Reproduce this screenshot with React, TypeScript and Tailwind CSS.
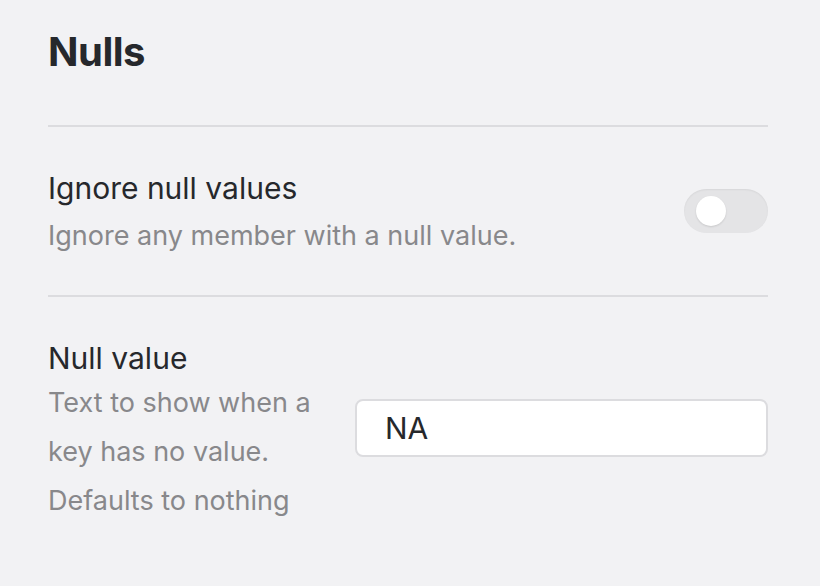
export default function App() {
  return (
    <div className="min-h-[586px] w-[820px] bg-[#f2f2f4] pl-12 pr-[52px] pt-[26px] font-['Inter',sans-serif]">
      <h1 className="text-[40px] font-bold leading-[52px] tracking-[-0.5px] text-[#26282c]">
        Nulls
      </h1>

      <hr className="mt-[47px] border-t-2 border-[#dcdcdf]" />

      <div className="flex items-center justify-between pt-[43px] pb-[43px]">
        <div>
          <div className="text-[30px] leading-[36px] text-[#26282c]">
            Ignore null values
          </div>
          <div className="mt-[14px] text-[27px] leading-[32px] text-[#88888b]">
            Ignore any member with a null value.
          </div>
        </div>
        <button className="relative h-[44px] w-[84px] rounded-full bg-[#e4e4e6] shadow-[inset_0_1px_2px_rgba(0,0,0,0.06)]">
          <span className="absolute left-[12px] top-[7px] h-[30px] w-[30px] rounded-full bg-white shadow-[0_1px_2px_rgba(0,0,0,0.12)]" />
        </button>
      </div>

      <hr className="border-t-2 border-[#dcdcdf]" />

      <div className="flex items-start gap-[11px] pt-[43px]">
        <div className="w-[296px] shrink-0">
          <div className="text-[30px] leading-[36px] text-[#26282c]">
            Null value
          </div>
          <div className="mt-[2px] text-[27px] leading-[49px] text-[#88888b]">
            Text to show when a key has no value. Defaults to nothing
          </div>
        </div>
        <input
          defaultValue="NA"
          className="mt-[59px] h-[58px] min-w-0 flex-1 rounded-[8px] border-2 border-[#dcdcdf] bg-white px-[28px] text-[30px] text-[#26282c] outline-none"
        />
      </div>
    </div>
  );
}
